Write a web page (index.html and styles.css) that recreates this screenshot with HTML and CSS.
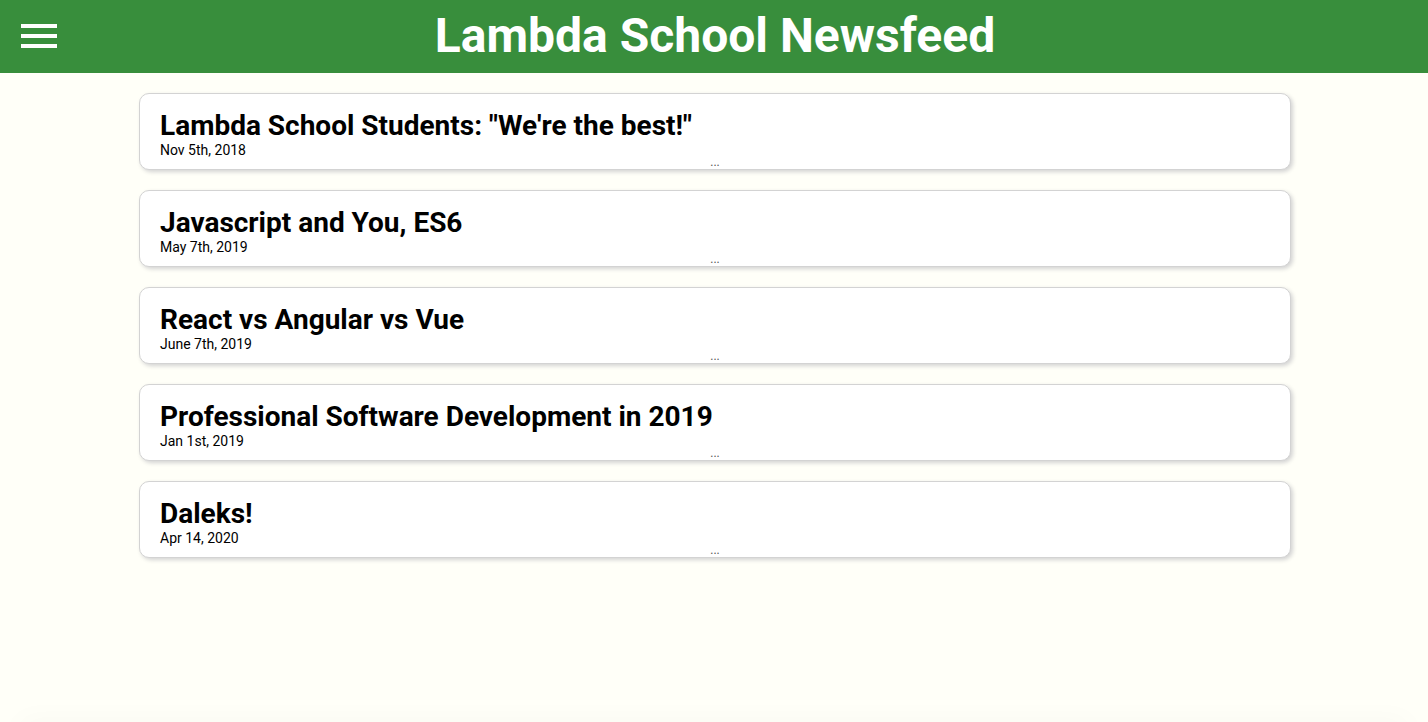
FILE: index.html
```html
<!DOCTYPE html>
<html lang="en">
<head>
<meta charset="utf-8">
<meta name="viewport" content="width=device-width, initial-scale=1">
<title>Lambda School Newsfeed</title>
<link rel="stylesheet" href="styles.css">
</head>
<body>
<header class="header">
  <button class="menu-button" type="button" aria-label="Open menu">
    <svg class="menu-icon" viewBox="0 0 36 24" aria-hidden="true"><path d="M0 0h36v4H0zM0 10h36v4H0zM0 20h36v4H0z"/></svg>
  </button>
  <h1 class="title">Lambda School Newsfeed</h1>
</header>
<main class="articles">
  <article class="article">
    <h2 class="headline">Lambda School Students: "We're the best!"</h2>
    <p class="date">Nov 5th, 2018</p>
    <button class="expand" type="button" aria-label="Expand article">...</button>
  </article>
  <article class="article">
    <h2 class="headline">Javascript and You, ES6</h2>
    <p class="date">May 7th, 2019</p>
    <button class="expand" type="button" aria-label="Expand article">...</button>
  </article>
  <article class="article">
    <h2 class="headline">React vs Angular vs Vue</h2>
    <p class="date">June 7th, 2019</p>
    <button class="expand" type="button" aria-label="Expand article">...</button>
  </article>
  <article class="article">
    <h2 class="headline">Professional Software Development in 2019</h2>
    <p class="date">Jan 1st, 2019</p>
    <button class="expand" type="button" aria-label="Expand article">...</button>
  </article>
  <article class="article">
    <h2 class="headline">Daleks!</h2>
    <p class="date">Apr 14, 2020</p>
    <button class="expand" type="button" aria-label="Expand article">...</button>
  </article>
</main>
<div class="bottom-shade"></div>
</body>
</html>
```
FILE: styles.css
```css
* { box-sizing: border-box; }

body {
  margin: 0;
  min-height: 100vh;
  background: #fffff8;
  color: #000;
  font-family: Roboto, sans-serif;
}

.header {
  display: grid;
  grid-template-columns: 60px 1fr 60px;
  align-items: center;
  padding: 0 19px 1px 21px;
  background: #388e3c;
  color: #fff;
}

.menu-button {
  display: flex;
  width: 36px;
  padding: 0;
  border: 0;
  background: none;
  cursor: pointer;
}

.menu-icon {
  width: 36px;
  height: 24px;
  fill: #fff;
}

.title {
  margin: 0;
  font-size: 48px;
  line-height: 72px;
  font-weight: 700;
  text-align: center;
}

.articles {
  display: flex;
  flex-direction: column;
  gap: 20px;
  max-width: 1154px;
  margin: 20px auto;
  padding-left: 2px;
}

.article {
  display: flex;
  flex-direction: column;
  padding: 16px 20px 2px;
  background: #fff;
  border: 1px solid #d3d3d3;
  border-radius: 10px;
  box-shadow: 2px 2px 4px #d3d3d3;
}

.headline {
  margin: 0;
  font-size: 28px;
  line-height: 32px;
  font-weight: 700;
}

.date {
  margin: 0;
  font-size: 14px;
  line-height: 16px;
}

.expand {
  align-self: center;
  padding: 0;
  border: 0;
  background: none;
  color: #555;
  font: 12px/9px Roboto, sans-serif;
  cursor: pointer;
}

.bottom-shade {
  position: fixed;
  right: 28px;
  bottom: 0;
  left: 28px;
  height: 0;
  box-shadow: 0 8px 28px 8px rgb(0 0 0 / 4%);
  pointer-events: none;
}
```
